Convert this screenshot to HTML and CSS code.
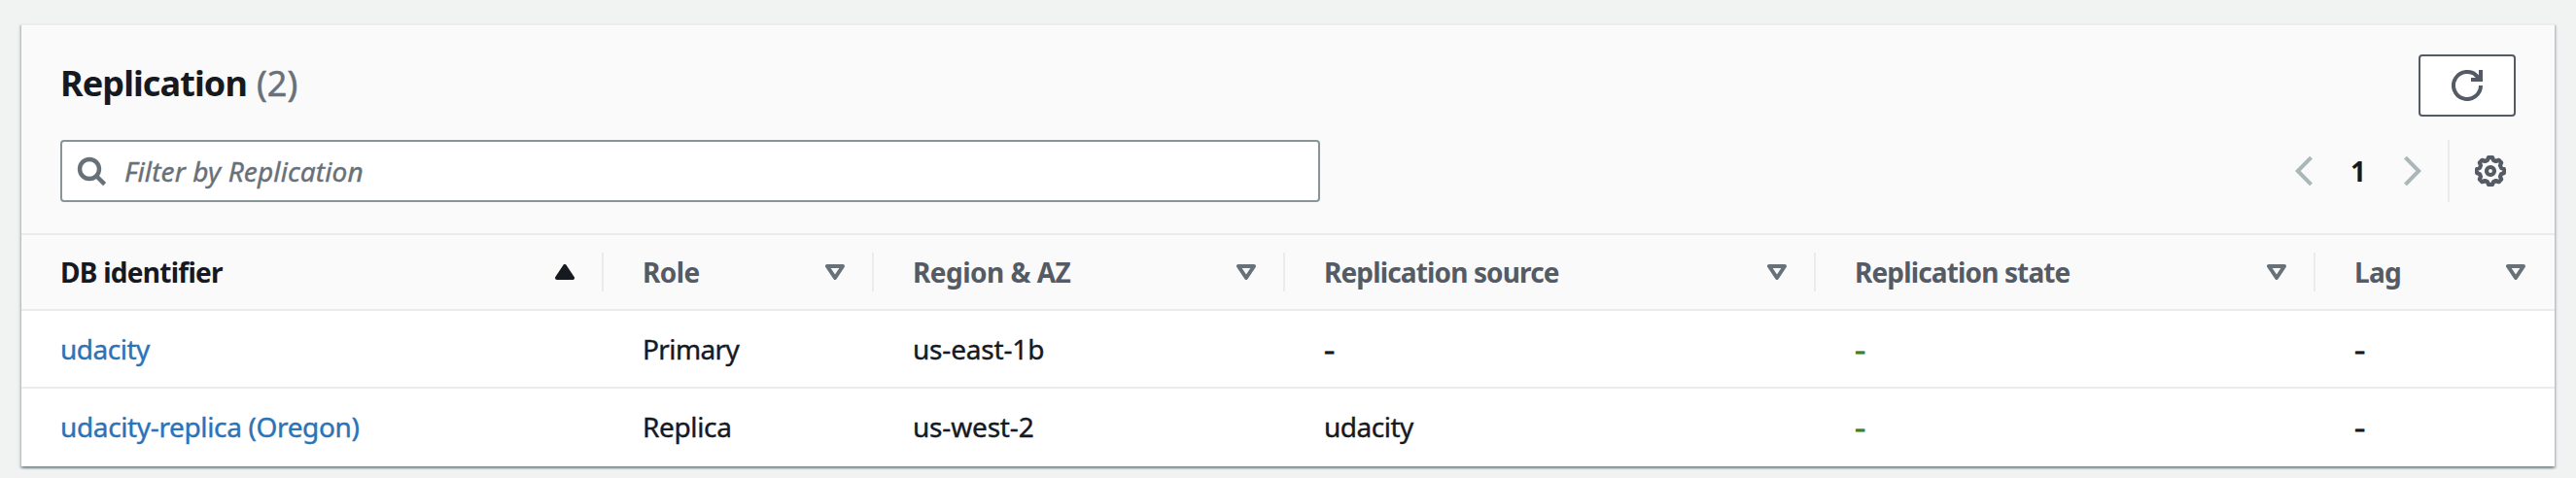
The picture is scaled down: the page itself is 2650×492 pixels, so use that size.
FILE: index.html
```html
<!DOCTYPE html>
<html lang="en">
<head>
<meta charset="utf-8">
<title>Replication</title>
<link rel="stylesheet" href="styles.css">
</head>
<body>
<svg class="defs" width="0" height="0" aria-hidden="true">
  <symbol id="sort" viewBox="0 0 20 16"><path d="M2 2h16l-8 12z" fill="none" stroke="currentColor" stroke-width="4" stroke-linejoin="round"/></symbol>
  <symbol id="sorted" viewBox="0 0 20 16"><path d="M10 2L18 14H2z" fill="currentColor" stroke="currentColor" stroke-width="4" stroke-linejoin="round"/></symbol>
</svg>
<section class="card">
  <header class="header">
    <div class="title-row">
      <h2 class="title"><span class="name">Replication</span><span class="count">(2)</span></h2>
      <button class="refresh" aria-label="Refresh">
        <svg width="32" height="32" viewBox="0 0 32 32" fill="none" stroke="currentColor" stroke-width="4"><path d="M30 16a14 14 0 1 1-3.600-9.400L29 9.500"/><path d="M30 0v10H20"/></svg>
      </button>
    </div>
    <div class="tools">
      <div class="filter">
        <svg width="32" height="32" viewBox="0 0 32 32" fill="none" stroke="currentColor" stroke-width="4.400"><circle cx="14" cy="14" r="10"/><path d="M21 21l8.600 8.600"/></svg>
        <span class="placeholder">Filter by Replication</span>
      </div>
      <div class="pager">
        <svg width="18" height="32" viewBox="0 0 18 32" fill="none" stroke="currentColor" stroke-width="4"><path d="M16.500 2.200L2.800 16l13.700 13.800"/></svg>
        <span class="page">1</span>
        <svg width="18" height="32" viewBox="0 0 18 32" fill="none" stroke="currentColor" stroke-width="4"><path d="M1.500 2.200L15.200 16 1.500 29.800"/></svg>
        <div class="settings">
          <svg width="32" height="32" viewBox="0 0 32 32" fill="none" stroke="currentColor" stroke-width="4.200" stroke-linejoin="round"><circle cx="16" cy="16" r="4"/><path d="M14 2.100h4l1.200 2.900 2.500 1 2.900-1.200 2.600 2.600L26 10.300l1 2.500 2.900 1.200v4L27 19.200l-1 2.500 1.200 2.900-2.600 2.600-2.900-1.200-2.500 1-1.200 2.900h-4L12.800 27l-2.500-1-2.900 1.200-2.600-2.600L6 21.700l-1-2.500L2.100 18v-4L5 12.800l1-2.500-1.200-2.900 2.600-2.600L10.300 6l2.500-1z"/></svg>
        </div>
      </div>
    </div>
  </header>
  <div class="row head">
    <div class="th active"><span class="t-id">DB identifier</span><svg class="tri"><use href="#sorted"/></svg></div>
    <div class="th"><span class="t-role">Role</span><svg class="tri"><use href="#sort"/></svg></div>
    <div class="th"><span class="t-region">Region &amp; AZ</span><svg class="tri"><use href="#sort"/></svg></div>
    <div class="th"><span class="t-long">Replication source</span><svg class="tri"><use href="#sort"/></svg></div>
    <div class="th"><span class="t-long">Replication state</span><svg class="tri"><use href="#sort"/></svg></div>
    <div class="th"><span class="t-lag">Lag</span><svg class="tri"><use href="#sort"/></svg></div>
  </div>
  <div class="row">
    <div class="td"><a class="link udacity">udacity</a></div>
    <div class="td primary">Primary</div>
    <div class="td region">us-east-1b</div>
    <div class="td"><span class="dash">-</span></div>
    <div class="td ok"><span class="dash">-</span></div>
    <div class="td"><span class="dash">-</span></div>
  </div>
  <div class="row">
    <div class="td"><a class="link replica">udacity-replica (Oregon)</a></div>
    <div class="td replica">Replica</div>
    <div class="td region">us-west-2</div>
    <div class="td udacity">udacity</div>
    <div class="td ok"><span class="dash">-</span></div>
    <div class="td"><span class="dash">-</span></div>
  </div>
</section>
</body>
</html>
```
FILE: styles.css
```css
* { box-sizing: border-box; }
body {
  margin: 0;
  padding: 24px 22px 0;
  height: 492px;
  overflow: hidden;
  background: #f1f3f3;
  color: #16191f;
  font: 28px/40px "Noto Sans", sans-serif;
}
svg { display: block; flex: none; }
.defs { position: absolute; }
.card {
  width: 2606px;
  height: 456px;
  background: #fff;
  border-top: 2px solid #eaeded;
  box-shadow: 0 2px 2px rgba(0,28,36,.3), 2px 2px 2px rgba(0,28,36,.15), -2px 2px 2px rgba(0,28,36,.15);
}
.header {
  height: 216px;
  padding: 30px 40px 0;
  background: #fafafa;
  border-bottom: 2px solid #eaebeb;
}
.title-row { display: flex; justify-content: space-between; height: 88px; }
.title { margin: 6px 0 0; font-size: 36px; line-height: 48px; font-weight: 700; }
.name { letter-spacing: -.9px; margin-right: 10px; }
.count { font-weight: 400; color: #687078; letter-spacing: .1px; -webkit-text-stroke: .5px; }
.refresh {
  display: flex;
  align-items: center;
  justify-content: center;
  width: 100px;
  height: 64px;
  padding: 0;
  background: #fff;
  border: 2px solid #545b64;
  border-radius: 4px;
  color: #545b64;
}
.tools { display: flex; justify-content: space-between; height: 64px; }
.filter {
  display: flex;
  align-items: center;
  gap: 18px;
  width: 1296px;
  padding-left: 14px;
  background: #fff;
  border: 2px solid #879596;
  border-radius: 4px;
  color: #687078;
}
.placeholder { font-style: italic; letter-spacing: .12px; -webkit-text-stroke: .4px; }
.pager { display: flex; align-items: center; color: #aab7b8; }
.page { width: 94px; text-align: center; font-weight: 700; color: #16191f; }
.settings {
  display: flex;
  align-items: center;
  height: 64px;
  margin-left: 27px;
  padding: 0 10px 0 26px;
  border-left: 2px solid #eaebeb;
  color: #545b64;
}
.row {
  display: grid;
  grid-template-columns: 599px 278px 423px 546px 514px 246px;
  align-items: center;
  height: 80px;
  border-bottom: 2px solid #eaebeb;
}
.row:last-child { border-bottom: 0; padding-bottom: 2px; }
.head { height: 78px; background: #fafafa; font-weight: 700; color: #545b64; }
.th {
  display: flex;
  align-items: center;
  justify-content: space-between;
  height: 40px;
  padding: 0 28px 0 40px;
  border-right: 2px solid #eaebeb;
}
.th:last-child { border-color: transparent; }
.th span { padding-bottom: 1px; }
.active { color: #16191f; }
.tri { width: 20px; height: 16px; color: #687078; }
.active .tri { color: #16191f; }
.td { padding-left: 40px; white-space: nowrap; -webkit-text-stroke: .4px; }
.link { color: #2b73b8; }
.ok { color: #407e26; }
.dash { display: inline-block; transform: scaleX(1.25); transform-origin: left; -webkit-text-stroke: .8px; }
.t-id { letter-spacing: -.73px; }
.t-role { letter-spacing: -.57px; }
.t-region { letter-spacing: -.52px; }
.t-long { letter-spacing: -.86px; }
.t-lag { letter-spacing: -.7px; }
.udacity { letter-spacing: -.5px; }
.replica { letter-spacing: -.36px; }
.primary { letter-spacing: -.6px; }
.region { letter-spacing: -.18px; }
```
